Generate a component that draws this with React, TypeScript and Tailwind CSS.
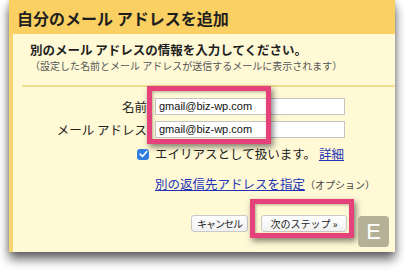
export default function App() {
  const jp = "font-['Noto_Sans_CJK_JP','Noto_Sans',sans-serif]"
  return (
    <div className="w-[405px] h-[271px] bg-white overflow-hidden pl-[9px]">
      <div className={`relative w-[386px] shadow-[0_7px_10px_rgba(0,0,0,0.62),0_0_5px_rgba(0,0,0,0.18)] ${jp}`}>
        <div className="h-[34px] bg-[#f9d061] pl-[8px] pt-[1px] flex items-center text-[16px] font-bold text-[#1e1e1e] leading-none">
          自分のメール アドレスを追加
        </div>

        <div className="h-[218px] bg-[#fff9d5] border-l-4 border-[#f6d46f] pt-[8px]">
          <div className="pl-[17px]">
            <p className="text-[12.5px] leading-[16px] font-bold text-[#1e1e1e]">別のメール アドレスの情報を入力してください。</p>
            <p className="mt-[1px] text-[10px] leading-[14px] text-[#555]">（設定した名前とメール アドレスが送信するメールに表示されます）</p>
          </div>

          <div className="ml-[9px] mt-[12px] h-[2px] bg-[#f2dc8e]" />

          <div className="mt-[11px] grid grid-cols-[134px_190px] gap-x-[8px] gap-y-[6px] items-center">
            <span className="text-right text-[12.5px] leading-[17px] text-[#222]">名前</span>
            <div className="h-[17px] bg-white border border-[#c4c4c4] pl-[3px] flex items-center font-['Liberation_Sans',Arial,sans-serif] text-[11px] text-[#111]">
              gmail@biz-wp.com
            </div>
            <span className="text-right text-[12.5px] leading-[17px] text-[#222]">メール アドレス</span>
            <div className="h-[17px] bg-white border border-[#c4c4c4] pl-[3px] flex items-center font-['Liberation_Sans',Arial,sans-serif] text-[11px] text-[#111]">
              gmail@biz-wp.com
            </div>
          </div>

          <div className="mt-[8px] pl-[124px] flex items-center gap-[6px] text-[12.5px] leading-[16px] text-[#222]">
            <span className="w-[12px] h-[11px] rounded-[3px] bg-[#2f7de0] flex items-center justify-center">
              <svg width="9" height="8" viewBox="0 0 9 8" fill="none">
                <path d="M1.2 4.2 L3.5 6.4 L7.8 1.4" stroke="white" strokeWidth="1.6" strokeLinecap="round" strokeLinejoin="round" />
              </svg>
            </span>
            <span>
              エイリアスとして扱います。<a className="ml-[3px] text-[#2233b8] underline">詳細</a>
            </span>
          </div>

          <div className="mt-[14px] pl-[142px] flex items-baseline text-[#222]">
            <a className="text-[12.5px] leading-[16px] text-[#2233b8] underline">別の返信先アドレスを指定</a>
            <span className="text-[10px] leading-[16px] text-[#444]">（オプション）</span>
          </div>

          <div className="mt-[22px] pr-[48px] flex justify-end gap-[13px]">
            <button className="w-[57px] h-[17px] rounded-[3px] border border-[#c9c9c9] bg-gradient-to-b from-white to-[#f1f1f1] text-[10px] tracking-[-1px] leading-none text-[#222] flex items-center justify-center">
              キャンセル
            </button>
            <button className="w-[86px] h-[17px] rounded-[3px] border border-[#c9c9c9] bg-gradient-to-b from-white to-[#f1f1f1] text-[10px] leading-none text-[#222] flex items-center justify-center">
              次のステップ »
            </button>
          </div>
        </div>

        <div className="absolute left-[138px] top-[86px] w-[124px] h-[58px] border-[5px] border-[#e5427c] shadow-[2px_3px_6px_rgba(0,0,0,0.5),inset_1px_1px_3px_rgba(0,0,0,0.3)]" />
        <div className="absolute left-[241px] top-[199px] w-[104px] h-[39px] border-[5px] border-[#e5427c] shadow-[2px_3px_6px_rgba(0,0,0,0.5),inset_1px_1px_3px_rgba(0,0,0,0.3)]" />
        <div className="absolute left-[349px] top-[216px] w-[31px] h-[31px] rounded-[4px] bg-[#b4b196] flex items-center justify-center font-['Liberation_Sans',Arial,sans-serif] text-[22px] text-white leading-none">
          E
        </div>
      </div>
    </div>
  )
}
